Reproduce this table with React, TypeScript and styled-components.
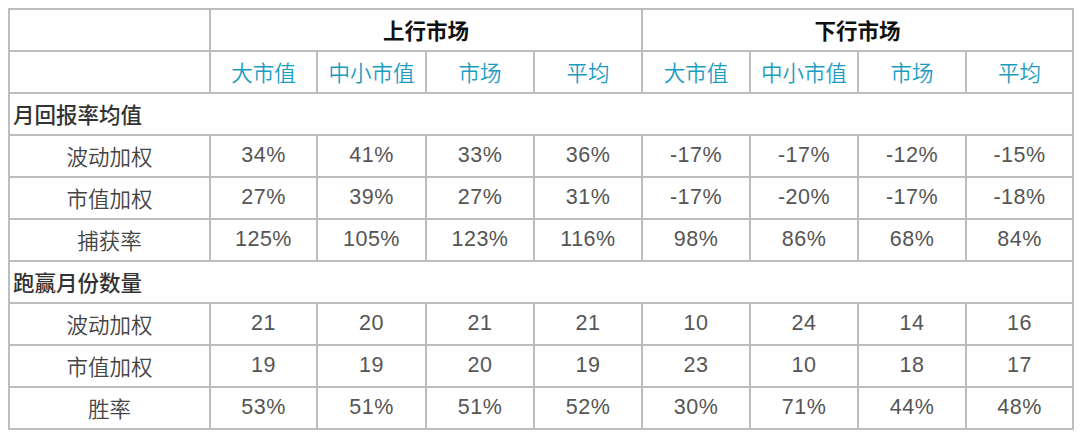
import React from "react";
import styled, { createGlobalStyle } from "styled-components";

const Global = createGlobalStyle`
  html, body { margin: 0; padding: 0; background: #fff; }
  body { font-family: "Liberation Sans", "Noto Sans CJK SC", sans-serif; }
`;

const Wrap = styled.div`
  padding: 8px 0 0 8px;
`;

const Table = styled.table`
  border-collapse: collapse;
  table-layout: fixed;
  width: 1064px;
  color: #444;
`;

const Row = styled.tr`
  height: 42px;
`;

type Kind = "head" | "sub" | "section" | "label" | "num";

const Cell = styled.td<{ $kind?: Kind }>`
  border: 2px solid #bdbdbd;
  padding: 0;
  text-align: ${(p) => (p.$kind === "section" ? "left" : "center")};
  padding-left: ${(p) => (p.$kind === "section" ? "3px" : "0")};
  vertical-align: middle;
  line-height: 1;
  white-space: nowrap;
  font-family: ${(p) =>
    p.$kind === "num" ? `"Liberation Sans", sans-serif` : `"Noto Sans CJK SC", sans-serif`};
  font-size: ${(p) => (p.$kind === "num" ? "21.5px" : "21.5px")};
  letter-spacing: ${(p) => (p.$kind === "num" ? "0.5px" : "0")};
  color: ${(p) =>
    p.$kind === "head"
      ? "#111"
      : p.$kind === "sub"
      ? "#1b9cc2"
      : p.$kind === "section"
      ? "#333"
      : p.$kind === "num"
      ? "#555"
      : "#444"};
  font-weight: ${(p) => (p.$kind === "head" ? 700 : p.$kind === "section" ? 500 : p.$kind === "num" ? 400 : 350)};
`;

const subs = ["大市值", "中小市值", "市场", "平均"];

const sections: { title: string; rows: [string, string[]][] }[] = [
  {
    title: "月回报率均值",
    rows: [
      ["波动加权", ["34%", "41%", "33%", "36%", "-17%", "-17%", "-12%", "-15%"]],
      ["市值加权", ["27%", "39%", "27%", "31%", "-17%", "-20%", "-17%", "-18%"]],
      ["捕获率", ["125%", "105%", "123%", "116%", "98%", "86%", "68%", "84%"]],
    ],
  },
  {
    title: "跑赢月份数量",
    rows: [
      ["波动加权", ["21", "20", "21", "21", "10", "24", "14", "16"]],
      ["市值加权", ["19", "19", "20", "19", "23", "10", "18", "17"]],
      ["胜率", ["53%", "51%", "51%", "52%", "30%", "71%", "44%", "48%"]],
    ],
  },
];

const widths = [201, 107, 109, 108, 108, 108, 108, 108, 107];

export default function App() {
  return (
    <>
      <Global />
      <Wrap>
        <Table>
          <colgroup>
            {widths.map((w, i) => (
              <col key={i} style={{ width: w }} />
            ))}
          </colgroup>
          <tbody>
            <Row>
              <Cell />
              <Cell $kind="head" colSpan={4}>上行市场</Cell>
              <Cell $kind="head" colSpan={4}>下行市场</Cell>
            </Row>
            <Row>
              <Cell />
              {[...subs, ...subs].map((s, i) => (
                <Cell key={i} $kind="sub">{s}</Cell>
              ))}
            </Row>
            {sections.map((sec) => (
              <React.Fragment key={sec.title}>
                <Row>
                  <Cell $kind="section" colSpan={9}>{sec.title}</Cell>
                </Row>
                {sec.rows.map(([label, vals]) => (
                  <Row key={label}>
                    <Cell $kind="label">{label}</Cell>
                    {vals.map((v, i) => (
                      <Cell key={i} $kind="num">{v}</Cell>
                    ))}
                  </Row>
                ))}
              </React.Fragment>
            ))}
          </tbody>
        </Table>
      </Wrap>
    </>
  );
}
